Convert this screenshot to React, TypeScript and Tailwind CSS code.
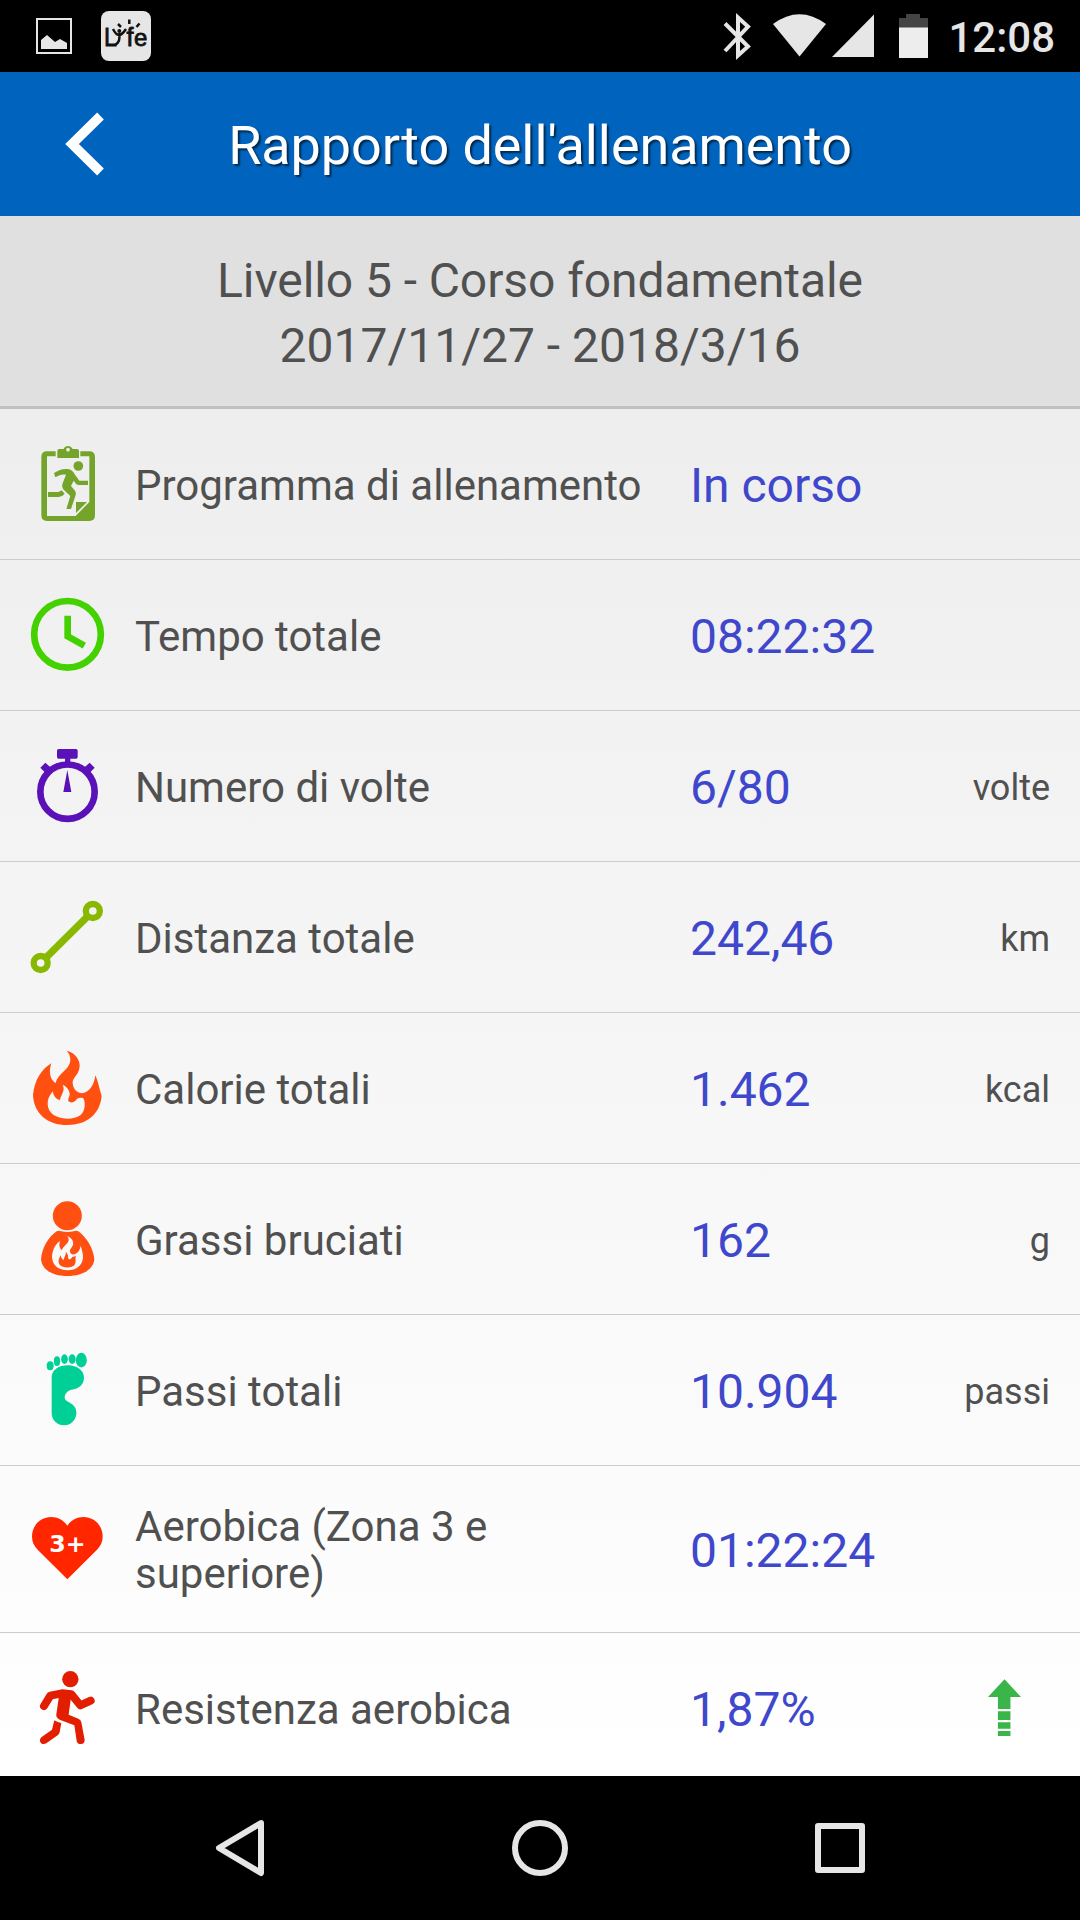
import type { ReactNode } from "react";

interface ReportRow {
  label: string;
  value: string;
  unit?: string;
  icon: ReactNode;
  trendUp?: boolean;
  tall?: boolean;
}

const iconClass = "h-20 w-20 shrink-0";

function ProgramIcon() {
  return (
    <svg viewBox="84 72 240 240" className={iconClass} fill="#74a42a">
      <path d="M167 94H141Q124 94 124 111V286Q124 303 141 303H268Q285 303 285 286V111Q285 94 268 94H241V109H268V246L227 288H141V109H167Z" />
      <path d="M172 114V93Q172 87 178 87H191C193 82 198 78 204 78S215 82 218 87H231Q237 87 237 93V114Z" />
      <circle cx="204" cy="89" r="5.5" fill="#eeeeee" />
      <path d="M228 246H261L228 279Z" />
      <circle cx="235" cy="138" r="14.5" />
      <path d="M162 159C174 151 188 146 202 147C214 148 220 155 225 164L238 182H264V195H237C230 195 227 190 221 182L213 198L225 212Q229 217 227 225L213 267H199L211 228L191 209Q184 201 188 190L198 164C186 162 177 166 166 172Z" />
      <path d="M144 216H174Q178 216 185 211L194 221Q187 230 176 231H144Z" />
    </svg>
  );
}

function ClockIcon() {
  return (
    <svg viewBox="84 525 240 240" className={iconClass} fill="none" stroke="#43d100" strokeWidth="20">
      <circle cx="202.500" cy="643" r="100" />
      <path d="M203 587V649L253 677" />
    </svg>
  );
}

function StopwatchIcon() {
  return (
    <svg viewBox="84 78 240 240" className={iconClass} fill="#5a12b8">
      <circle cx="202.500" cy="215" r="81.500" fill="none" stroke="#5a12b8" strokeWidth="20" />
      <rect x="171" y="87" width="62" height="29" rx="5" />
      <path d="M195 112H211V130H195ZM121 143L136 128L153 143L139 161ZM284 143L269 128L252 143L266 161ZM202 150L214 216H190Z" />
    </svg>
  );
}

function DistanceIcon() {
  return (
    <svg viewBox="84 531 240 240" className={iconClass} fill="none" stroke="#88b900" strokeWidth="19">
      <circle cx="278.500" cy="573" r="21" />
      <circle cx="122" cy="729" r="21" />
      <path d="M137 714L264 588" strokeWidth="22" />
    </svg>
  );
}

function FlameIcon() {
  return (
    <svg viewBox="84 54 240 240" className={iconClass} fill="#ff5011">
      <path d="M200 62C225 68 240 88 239 109C237 137 216 143 218 160C219 177 232 190 247 190C269 187 283 163 286 136C294 153 298 176 305 198C300 252 261 285 202 285C142 285 101 250 99 194C104 151 124 117 154 100C147 121 147 146 167 160C174 128 211 120 211 88C211 79 207 69 200 62Z" />
      <path d="M188 164C204 172 210 185 209 195C208 202 203 205 205 214C213 220 224 218 231 206C238 203 244 203 250 205C253 211 255 219 254 228C252 253 236 266 202 266C167 266 144 249 143 223C142 209 148 195 159 184C159 195 166 207 180 210C182 193 197 184 188 164Z" fill="#f7f7f7" />
    </svg>
  );
}

function FatBurnIcon() {
  return (
    <svg viewBox="84 507 240 240" className={iconClass} fill="#ff5011">
      <circle cx="202" cy="557.500" r="43.500" />
      <path d="M170 604Q176 601 184 604Q202 608 221 604Q229 601 235 604C263 625 280 657 283 688C280 720 246 738 202 738S126 720 123 688C126 654 144 622 170 604Z" />
      <path d="M202 618C215 624 222 634 219 645C215 654 208 659 210 666C213 674 220 675 227 671C236 667 240 658 242 647C246 660 250 673 249 684C246 707 229 721 203 721C175 721 157 705 156 681C157 661 165 643 180 633C176 646 179 656 186 660C189 647 207 640 206 629Q206 623 202 618Z" fill="#f9f9f9" />
      <path d="M197 665C203 671 206 678 204 685Q210 693 217 681L228 678C224 688 230 695 224 704C216 715 188 715 179 704C173 695 176 686 182 676Q183 687 192 690C191 681 199 676 197 665Z" />
    </svg>
  );
}

function FootIcon() {
  return (
    <svg viewBox="84 60 240 240" className={iconClass} fill="#00d096">
      <ellipse cx="150.500" cy="107.500" rx="10.500" ry="13.500" />
      <ellipse cx="171" cy="93.500" rx="9.500" ry="14.500" />
      <ellipse cx="193.500" cy="87.500" rx="10" ry="14.500" />
      <ellipse cx="216.500" cy="87.500" rx="10.500" ry="14.500" />
      <ellipse cx="244" cy="90.500" rx="16.500" ry="22" />
      <path d="M155 142C155 120 176 106 204 106C231 106 252 121 252 143C252 162 237 177 214 179C201 182 195 192 194 201C194 215 206 214 219 225C227 233 230 241 229 252C227 271 212 286 193 286C171 286 155 270 155 249Z" />
    </svg>
  );
}

function HeartIcon() {
  return (
    <svg viewBox="84 537 240 240" className={iconClass} fill="#ff2600">
      <path d="M202 587C213 571 231 561 251 561C283 561 308 587 308 619C308 636 302 648 291 659L202 748L113 659C102 648 96 636 96 619C96 587 121 561 153 561C173 561 191 571 202 587Z" />
      <text x="202" y="666" fontSize="71" fontWeight="700" textAnchor="middle" fill="#ffffff" className="font-['DejaVu_Sans',sans-serif]">
        3+
      </text>
    </svg>
  );
}

function RunnerIcon() {
  return (
    <svg viewBox="84 144 240 240" className={iconClass} fill="none" stroke="#e31d00" strokeWidth="24" strokeLinecap="round" strokeLinejoin="round">
      <circle cx="211" cy="177.500" r="24.500" fill="#e31d00" stroke="none" />
      <path d="M132 258L151 227L186 220L214 223L241 256L272 242" />
      <path d="M178 222L214 225L206 284L235 296Q243 299 244 307L254 360Q254 372 243 372Q231 372 230 362L223 316L179 299Q167 293 169 283Z" fill="#e31d00" stroke="none" />
      <path d="M163 301Q173 308 184 309L179 337Q177 343 173 346L139 370Q134 373 127 372Q119 368 120 359Q121 353 126 350L156 329Z" fill="#e31d00" stroke="none" />
    </svg>
  );
}

function TrendArrow() {
  return (
    <svg viewBox="0 0 100 174" className="mr-[29px] h-[58px] w-[33px]" fill="#39b54a">
      <path d="M50 0L100 54H68V90H30V54H0ZM30 97H68V123H30ZM30 130H68V150H30ZM30 157H68V172H30Z" />
    </svg>
  );
}

const rows: ReportRow[] = [
  { label: "Programma di allenamento", value: "In corso", icon: <ProgramIcon /> },
  { label: "Tempo totale", value: "08:22:32", icon: <ClockIcon /> },
  { label: "Numero di volte", value: "6/80", unit: "volte", icon: <StopwatchIcon /> },
  { label: "Distanza totale", value: "242,46", unit: "km", icon: <DistanceIcon /> },
  { label: "Calorie totali", value: "1.462", unit: "kcal", icon: <FlameIcon /> },
  { label: "Grassi bruciati", value: "162", unit: "g", icon: <FatBurnIcon /> },
  { label: "Passi totali", value: "10.904", unit: "passi", icon: <FootIcon /> },
  { label: "Aerobica (Zona 3 e superiore)", value: "01:22:24", icon: <HeartIcon />, tall: true },
  { label: "Resistenza aerobica", value: "1,87%", icon: <RunnerIcon />, trendUp: true },
];

function StatusBar() {
  return (
    <div className="flex h-[72px] shrink-0 items-center bg-black text-[#e6e6e6]">
      {/* Notifications */}
      <svg viewBox="0 0 36 36" className="ml-9 h-9 w-9" fill="#e6e6e6">
        <path fillRule="evenodd" d="M0 0H36V36H0ZM2 2V34H34V2Z" />
        <path d="M5 31V22L11 17L19 24L24 21L31 25V31Z" />
      </svg>
      <svg viewBox="0 0 50 50" className="ml-[29px] h-[50px] w-[50px]">
        <rect width="50" height="50" rx="8" fill="#e6e6e6" />
        <g className="font-['Liberation_Sans',sans-serif]" fill="#111111" stroke="#111111" strokeWidth="0.800">
          <text x="3" y="35" fontSize="26" textLength="13" lengthAdjust="spacingAndGlyphs">L</text>
          <text x="25.500" y="35" fontSize="25">f</text>
          <text x="33" y="35" fontSize="24">e</text>
        </g>
        <circle cx="18.300" cy="20" r="2" fill="#111111" />
        <path d="M12 18Q15 24 18 24T25 18M18 22Q20 31 14 34" fill="none" stroke="#111111" strokeWidth="2.500" />
        <path d="M17 13L20 16M28.300 8.500V13M38.500 12.500L35.500 16" fill="none" stroke="#111111" strokeWidth="2.500" />
      </svg>

      {/* System icons */}
      <svg viewBox="723 12 206 48" className="ml-auto h-12 w-[206px]" fill="#e6e6e6">
        <path d="M725 23.500L748 46.500L738 55.500V17.500L748 26.500L725 51" fill="none" stroke="#e6e6e6" strokeWidth="4" />
        <path d="M773 24Q799.500 4.500 826 24L799.500 56.500Z" />
        <path d="M874 14.500V57H832Z" />
        <path d="M906 14H920V18H928V28H899V18H906Z" fill="#444444" />
        <path d="M899 27.500H928V58H899Z" fill="#ededed" />
      </svg>
      <span className="mr-[25px] ml-[19px] pt-1 text-[42px] leading-none font-medium">12:08</span>
    </div>
  );
}

function NavBar() {
  return (
    <div className="flex h-36 shrink-0 items-center justify-center gap-[240px] bg-black">
      <svg viewBox="0 0 60 60" className="h-[60px] w-[60px]" fill="none" stroke="#e6e6e6" strokeWidth="6" strokeLinejoin="round">
        <path d="M51 5L9 30L51 55Z" />
      </svg>
      <svg viewBox="0 0 60 60" className="h-[60px] w-[60px]" fill="none" stroke="#e6e6e6" strokeWidth="6">
        <circle cx="30" cy="30" r="25" />
      </svg>
      <svg viewBox="0 0 60 60" className="h-[60px] w-[60px]" fill="none" stroke="#e6e6e6" strokeWidth="6" strokeLinejoin="round">
        <rect x="8" y="8" width="44" height="44" />
      </svg>
    </div>
  );
}

export default function App() {
  return (
    <div className="flex h-[1920px] w-[1080px] flex-col overflow-hidden bg-black font-[Roboto,sans-serif] text-[#505050]">
      <StatusBar />

      {/* Title bar */}
      <header className="flex h-36 shrink-0 items-center bg-[#0064be]">
        <svg viewBox="0 0 40 64" className="ml-[65px] h-16 w-10" fill="none" stroke="#ffffff" strokeWidth="9.500">
          <path d="M35.500 4L7 32L35.500 60" />
        </svg>
        <h1 className="mr-[105px] flex-1 pt-[3px] text-center text-[54px] leading-none tracking-[-0.08px] text-white [text-shadow:2px_2px_2px_rgba(0,0,0,0.6)]">
          Rapporto dell'allenamento
        </h1>
      </header>

      <div className="h-[193px] shrink-0 border-b-[3px] border-[#c0c0c0] bg-[#e0e0e0] pt-8 text-center text-[48px] leading-[65px]">
        <p className="tracking-[-0.08px]">Livello 5 - Corso fondamentale</p>
        <p>2017/11/27 - 2018/3/16</p>
      </div>

      {/* Report list */}
      <main className="h-[1367px] shrink-0 overflow-hidden bg-linear-to-b from-[#eeeeee] to-white">
        {rows.map((row) => (
          <div
            key={row.label}
            className={`flex items-center border-b border-[#cccccc] pr-[30px] pl-7 ${row.tall ? "h-[167px]" : "h-[151px]"}`}
          >
            {row.icon}
            <span className="ml-[27px] w-[555px] pt-0.5 pr-10 text-[42px] leading-[47px]">{row.label}</span>
            <span className="pt-1 text-[48px] leading-none text-[#3f48cc]">{row.value}</span>
            <span className="ml-auto pt-1 text-[36px] leading-none">{row.unit}</span>
            {row.trendUp && <TrendArrow />}
          </div>
        ))}
      </main>

      <NavBar />
    </div>
  );
}
